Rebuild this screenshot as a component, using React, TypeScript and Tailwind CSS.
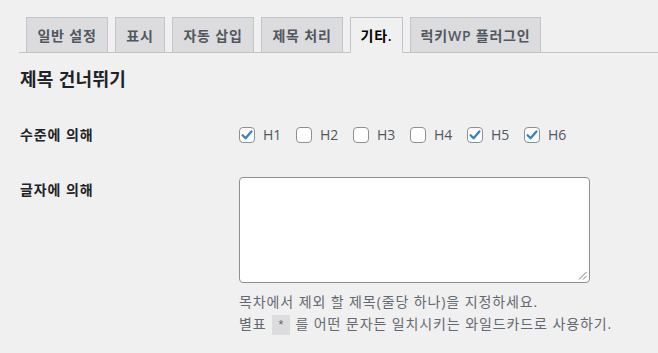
import React from "react";

const tabs = [
  { label: "일반 설정", w: "w-[82px]" },
  { label: "표시", w: "w-[50px]" },
  { label: "자동 삽입", w: "w-[82px]" },
  { label: "제목 처리", w: "w-[82px]" },
  { label: "기타.", w: "w-[53px]", active: true },
  { label: "럭키WP 플러그인", w: "w-[131px]" },
];

const levels = [
  { n: "H1", c: true },
  { n: "H2", c: false },
  { n: "H3", c: false },
  { n: "H4", c: false },
  { n: "H5", c: true },
  { n: "H6", c: true },
];

function Box({ checked }: { checked: boolean }) {
  return (
    <span className="flex h-[16px] w-[16px] items-center justify-center rounded-[4px] border border-[#8c8f94] bg-white">
      {checked && (
        <svg width="14" height="14" viewBox="0 0 14 14">
          <path d="M2.6 7.2 L5.6 10.2 L11.4 3.4" fill="none" stroke="#3582c4" strokeWidth="2.3" strokeLinecap="round" strokeLinejoin="round" />
        </svg>
      )}
    </span>
  );
}

export default function App() {
  return (
    <div className="min-h-[353px] w-[658px] bg-[#f0f0f1] pl-[19px] font-['Open_Sans','Noto_Sans_CJK_KR',sans-serif] text-[#1d2327]">
      <div className="flex border-b border-[#c3c4c7] pt-[17px]">
        {tabs.map((t) => (
          <div
            key={t.label}
            className={`ml-[7px] -mb-px flex h-[36px] ${t.w} items-center justify-center border text-[14px] font-semibold tracking-[0.8px] ${
              t.active
                ? "border-[#c3c4c7] border-b-[#f0f0f1] bg-[#f0f0f1] text-black"
                : "border-[#c3c4c7] bg-[#dcdcde] text-[#50575e]"
            }`}
          >
            {t.label}
          </div>
        ))}
      </div>
      <h2 className="mt-[14px] pl-px text-[18px] font-semibold leading-[25px] tracking-[0.3px] text-[#1d2327]">제목 건너뛰기</h2>
      <div className="mt-[32px] flex">
        <div className="w-[220px] pl-px text-[14px] font-semibold leading-[22px] tracking-[0.9px]">수준에 의해</div>
        <div className="flex items-center">
          {levels.map((l) => (
            <label key={l.n} className="mr-[17px] flex items-center gap-[8px] text-[14px] leading-[22px] text-[#50575e]">
              <Box checked={l.c} />
              <span className="w-[16px]">{l.n}</span>
            </label>
          ))}
        </div>
      </div>
      <div className="mt-[31px] flex">
        <div className="w-[220px] pl-px pt-[2px] text-[14px] font-semibold leading-[22px] tracking-[0.9px]">글자에 의해</div>
        <div>
          <div className="relative h-[106px] w-[351px] rounded-[4px] border border-[#8c8f94] bg-white">
            <svg className="absolute right-[2px] bottom-[2px]" width="9" height="9" viewBox="0 0 9 9">
              <path d="M8.5 1 L1 8.5 M8.5 5 L5 8.5" stroke="#777" strokeWidth="1" />
            </svg>
          </div>
          <p className="mt-[8px] text-[14px] leading-[22px] tracking-[0.9px] text-[#646970]">
            목차에서 제외 할 제목(줄당 하나)을 지정하세요.
            <br />
            별표 <code className="mx-px bg-[#dcdcde] px-[5px] pb-[2px] pt-[3px] font-['Liberation_Mono',monospace] text-[13px] tracking-normal">*</code> 를 어떤 문자든 일치시키는 와일드카드로 사용하기.
          </p>
        </div>
      </div>
    </div>
  );
}
